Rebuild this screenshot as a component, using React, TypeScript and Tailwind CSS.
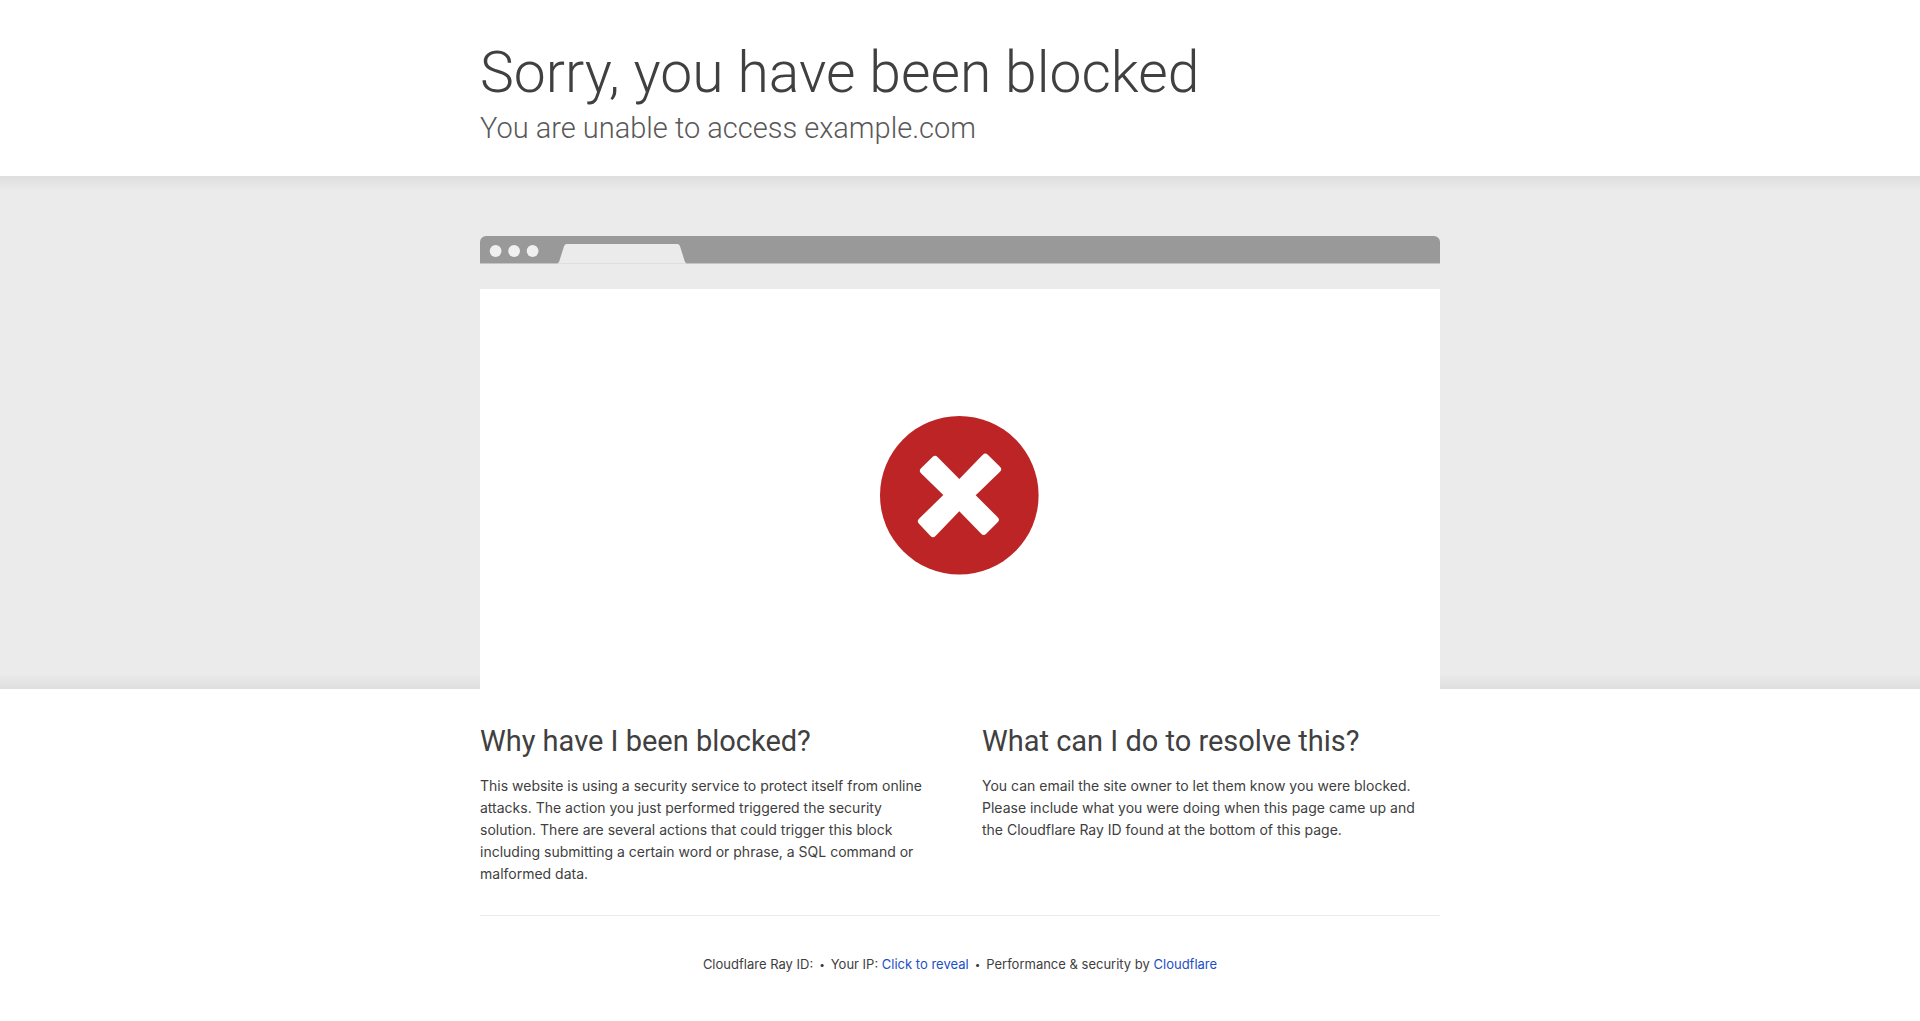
import React from "react";

function BrowserBar() {
  return (
    <svg viewBox="0 0 960 53" className="block w-full" aria-hidden="true">
      <path d="M0 53V6a6 6 0 0 1 6-6h948a6 6 0 0 1 6 6v47z" fill="#ebebeb" />
      <path d="M0 27V6a6 6 0 0 1 6-6h948a6 6 0 0 1 6 6v21z" fill="#999" />
      <path d="M0 27h960v1H0z" fill="#c4c4c4" />
      <g fill="#f0f0f0">
        <circle cx="15.6" cy="15" r="5.9" />
        <circle cx="34.1" cy="15" r="5.9" />
        <circle cx="52.6" cy="15" r="5.9" />
      </g>
      <path d="M77 27.300q1.600-.3 2.200-1.800l4.800-15.300q.7-2.200 2.800-2.200h110.400q2.100 0 2.800 2.200l4.800 15.300q.6 1.500 2.200 1.800z" fill="#ebebeb" />
      <path d="M78 27h128v1H78z" fill="#dedede" />
    </svg>
  );
}

function BlockedIcon() {
  return (
    <svg viewBox="0 0 160 160" className="size-40" role="img" aria-label="Blocked">
      <circle cx="79.3" cy="80.3" r="79.3" fill="#bd2426" />
      <path
        d="M41 58.200Q38.500 55.700 41 53.200L52.500 42Q55 39.500 57.500 42L79.300 64L102.800 39.700Q105.300 37.200 107.800 39.700L120 51.800Q122.500 54.300 120 56.800L95.700 80.300L117.700 102.200Q120.200 104.700 117.700 107.200L106.200 118.700Q103.700 121.200 101.200 118.700L79.300 96.300L55.500 121Q53 123.500 50.500 121L39 108.800Q36.500 106.300 39 103.800L63.300 80Z"
        fill="#fff"
      />
    </svg>
  );
}

function Answer({ title, children }: { title: string; children: React.ReactNode }) {
  return (
    <section>
      <h2 className="font-[Roboto,sans-serif] text-[29px] leading-10">{title}</h2>
      <p className="pt-3.5 pr-2 text-[14px] leading-[22px]">{children}</p>
    </section>
  );
}

export default function App() {
  return (
    <div className="min-h-screen bg-white font-[Inter,sans-serif] text-[#404040]">
      <header className="mx-auto max-w-[960px] pt-10 pb-7 font-[Roboto,sans-serif] font-light">
        <h1 className="text-[57px] leading-[66px]">Sorry, you have been blocked</h1>
        <p className="pt-0.5 text-[29px] leading-10 text-[#595959]">You are unable to access example.com</p>
      </header>
      <section className="bg-[linear-gradient(to_bottom,#dedede,#ebebeb_3%,#ebebeb_97%,#dedede)] pt-15">
        <div className="mx-auto max-w-[960px]">
          <BrowserBar />
          <div className="flex h-[400px] items-center justify-center bg-white pt-3">
            <BlockedIcon />
          </div>
        </div>
      </section>
      <main className="mx-auto max-w-[960px]">
        <div className="grid grid-cols-2 gap-11 pt-8">
          <Answer title="Why have I been blocked?">
            This website is using a security service to protect itself from online attacks. The action you just performed triggered the security solution. There are several actions that could trigger this block including submitting a certain word or phrase, a SQL command or malformed data.
          </Answer>
          <Answer title="What can I do to resolve this?">
            You can email the site owner to let them know you were blocked. Please include what you were doing when this page came up and the Cloudflare Ray ID found at the bottom of this page.
          </Answer>
        </div>
      </main>
      <footer className="mx-auto mt-7.5 flex max-w-[960px] flex-wrap justify-center gap-x-1.5 border-t border-[#ebebeb] py-9.5 text-[13px] leading-5">
        <span>Cloudflare Ray ID:</span>
        <span className="text-[10px]">•</span>
        <span>
          Your IP: <button type="button" className="text-[#1d4fc4]">Click to reveal</button>
        </span>
        <span className="text-[10px]">•</span>
        <span>
          Performance &amp; security by <a href="#cloudflare" className="text-[#1d4fc4]">Cloudflare</a>
        </span>
      </footer>
    </div>
  );
}
